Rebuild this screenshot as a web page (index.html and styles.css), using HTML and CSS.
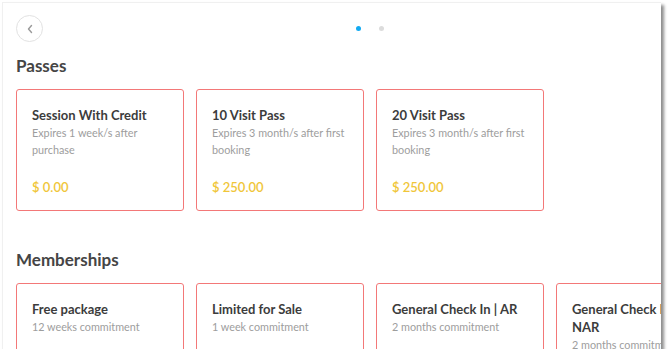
FILE: index.html
```html
<!DOCTYPE html>
<html>
<head>
<meta charset="utf-8">
<link rel="stylesheet" href="styles.css">
</head>
<body>
<div class="frame">
  <div class="topbar">
    <button class="back" aria-label="Back">
      <svg width="8" height="10" viewBox="0 0 8 10"><path d="M5.5 1.5 L2.5 5 L5.5 8.5" fill="none" stroke="#9a9a9a" stroke-width="1.4" stroke-linecap="round" stroke-linejoin="round"/></svg>
    </button>
    <div class="dots"><span class="dot active"></span><span class="dot"></span></div>
  </div>

  <h2 class="section-title">Passes</h2>
  <div class="cards">
    <div class="card pass">
      <div class="card-title">Session With Credit</div>
      <div class="card-desc">Expires 1 week/s after purchase</div>
      <div class="price">$ 0.00</div>
    </div>
    <div class="card pass">
      <div class="card-title">10 Visit Pass</div>
      <div class="card-desc">Expires 3 month/s after first booking</div>
      <div class="price">$ 250.00</div>
    </div>
    <div class="card pass">
      <div class="card-title">20 Visit Pass</div>
      <div class="card-desc">Expires 3 month/s after first booking</div>
      <div class="price">$ 250.00</div>
    </div>
  </div>

  <h2 class="section-title members">Memberships</h2>
  <div class="cards">
    <div class="card">
      <div class="card-title">Free package</div>
      <div class="card-desc">12 weeks commitment</div>
    </div>
    <div class="card">
      <div class="card-title">Limited for Sale</div>
      <div class="card-desc">1 week commitment</div>
    </div>
    <div class="card">
      <div class="card-title">General Check In | AR</div>
      <div class="card-desc">2 months commitment</div>
    </div>
    <div class="card">
      <div class="card-title">General Check In | NAR</div>
      <div class="card-desc">2 months commitment</div>
    </div>
  </div>
</div>
</body>
</html>
```

FILE: styles.css
```css
html, body {
  margin: 0;
  padding: 0;
  background: #ffffff;
}
body {
  padding: 2px 0 0 2px;
  font-family: Lato, "Noto Sans", sans-serif;
}
.frame {
  width: 645px;
  height: 346px;
  border-top: 1px solid #f0f0f0;
  border-left: 1px solid #f0f0f0;
  background: #fff;
  box-shadow: 3px 3px 3px rgba(0,0,0,0.45);
  overflow: hidden;
  padding-left: 13px;
  box-sizing: content-box;
}
.topbar {
  display: flex;
  align-items: center;
  padding-top: 12px;
  height: 27px;
}
.back {
  width: 27px;
  height: 27px;
  border-radius: 50%;
  border: 1px solid #e2e2e2;
  background: #fff;
  display: flex;
  align-items: center;
  justify-content: center;
  padding: 0;
}
.dots {
  display: flex;
  gap: 18px;
  margin-left: 313px;
}
.dot {
  width: 5px;
  height: 5px;
  border-radius: 50%;
  background: #dcdcdc;
}
.dot.active {
  background: #12aaf2;
}
.section-title {
  margin: 13px 0 0;
  font-size: 17px;
  line-height: 22px;
  font-weight: 700;
  color: #454545;
}
.section-title.members {
  margin-top: 38px;
}
.cards {
  display: flex;
  gap: 12px;
  margin-top: 12px;
}
.card {
  flex: 0 0 168px;
  box-sizing: border-box;
  border: 1.5px solid #f37878;
  border-radius: 3px;
  padding: 16px 12px 0 15px;
  display: flex;
  flex-direction: column;
  height: 122px;
}
.card-title {
  font-size: 13px;
  line-height: 18px;
  font-weight: 700;
  color: #3c3c3c;
  padding-right: 8px;
}
.card-desc {
  margin-top: 1px;
  font-size: 10.8px;
  line-height: 16.5px;
  color: #9d9d9d;
}
.price {
  margin-top: auto;
  margin-bottom: 14px;
  font-size: 13px;
  line-height: 18px;
  font-weight: 600;
  color: #f0c63a;
}
```
